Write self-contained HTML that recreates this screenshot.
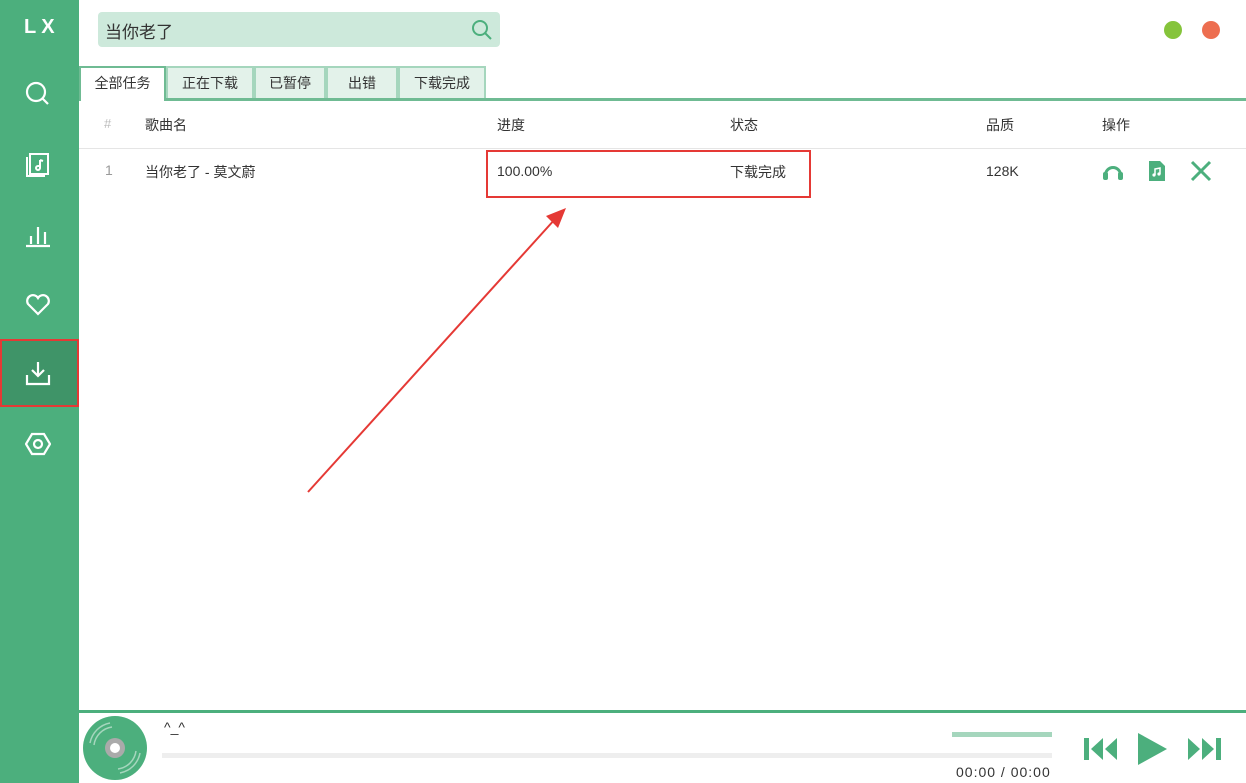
<!DOCTYPE html>
<html><head><meta charset="utf-8"><style>
*{margin:0;padding:0;box-sizing:border-box}
body{width:1246px;height:783px;overflow:hidden;background:#fff;font-family:"Liberation Sans","Noto Sans CJK SC",sans-serif;font-size:14px;color:#333;position:relative}
.side{position:absolute;left:0;top:0;width:79px;height:783px;background:#4caf7d}
.abs{position:absolute}
.tab{position:absolute;top:66px;height:32px;background:#e3f2ea;border:2px solid #a5d6bd;border-bottom:none;font-size:14px;line-height:30px;text-align:center;color:#333}
</style></head><body>
<div class="side"></div>
<div class="abs" style="left:24px;top:16px;color:#fff;font-weight:bold;font-size:20px;letter-spacing:5px">LX</div>
<svg class="abs" style="left:25px;top:81px" width="26" height="26" viewBox="0 0 26 26" fill="none" stroke="#fff" stroke-width="2.2"><circle cx="11" cy="11" r="9"/><path d="M17.5 17.5L23 23"/></svg>
<svg class="abs" style="left:25px;top:151px" width="26" height="26" viewBox="0 0 26 26" fill="none" stroke="#fff" stroke-width="2"><path d="M5 3h18v20H5z"/><path d="M2 6v19h18"/><path d="M15 9v8a2 2 0 1 1-2-2h2M15 9l3 1"/></svg>
<svg class="abs" style="left:25px;top:222px" width="26" height="26" viewBox="0 0 26 26" fill="none" stroke="#fff" stroke-width="2.2"><path d="M1 24h24M6 14v8M13 5v17M20 10v12"/></svg>
<svg class="abs" style="left:25px;top:292px" width="26" height="26" viewBox="0 0 26 26" fill="none" stroke="#fff" stroke-width="2.2"><path d="M13 22L3 12a5.5 5.5 0 0 1 10-6a5.5 5.5 0 0 1 10 6z"/></svg>
<div class="abs" style="left:0;top:339px;width:79px;height:68px;background:#3f9468;border:2px solid #e53935"></div>
<svg class="abs" style="left:25px;top:360px" width="26" height="26" viewBox="0 0 26 26" fill="none" stroke="#fff" stroke-width="2.2"><path d="M13 2v14M7 10l6 6 6-6M2 15v9h22v-9"/></svg>
<svg class="abs" style="left:25px;top:431px" width="26" height="26" viewBox="0 0 26 26" fill="none" stroke="#fff" stroke-width="2.2"><path d="M7 3h12l6 10-6 10H7L1 13z"/><circle cx="13" cy="13" r="4"/></svg>

<div class="abs" style="left:98px;top:12px;width:402px;height:35px;background:#cde9db;border-radius:4px"></div>
<div class="abs" style="left:105px;top:18px;font-size:17px;color:#333">当你老了</div>
<svg class="abs" style="left:471px;top:19px" width="22" height="22" viewBox="0 0 22 22" fill="none" stroke="#4caf7d" stroke-width="2"><circle cx="9" cy="9" r="7"/><path d="M14 14l6 6"/></svg>
<div class="abs" style="left:1164px;top:21px;width:18px;height:18px;border-radius:50%;background:#85c43b"></div>
<div class="abs" style="left:1202px;top:21px;width:18px;height:18px;border-radius:50%;background:#ed6e50"></div>

<div class="abs" style="left:79px;top:98px;width:1167px;height:3px;background:#6fbb93"></div>
<div class="tab" style="left:79px;width:87px;background:#fff;border-color:#6fbb93;height:35px">全部任务</div>
<div class="tab" style="left:166px;width:88px">正在下载</div>
<div class="tab" style="left:254px;width:72px">已暂停</div>
<div class="tab" style="left:326px;width:72px">出错</div>
<div class="tab" style="left:398px;width:88px">下载完成</div>

<div class="abs" style="left:104px;top:116px;color:#bbb;font-size:13px">#</div>
<div class="abs" style="left:145px;top:115px">歌曲名</div>
<div class="abs" style="left:497px;top:115px">进度</div>
<div class="abs" style="left:730px;top:115px">状态</div>
<div class="abs" style="left:986px;top:115px">品质</div>
<div class="abs" style="left:1102px;top:115px">操作</div>
<div class="abs" style="left:79px;top:148px;width:1167px;height:1px;background:#e5e5e5"></div>
<div class="abs" style="left:105px;top:162px;color:#999">1</div>
<div class="abs" style="left:145px;top:162px">当你老了 - 莫文蔚</div>
<div class="abs" style="left:486px;top:150px;width:325px;height:48px;border:2px solid #e53935"></div>
<div class="abs" style="left:497px;top:163px">100.00%</div>
<div class="abs" style="left:730px;top:162px">下载完成</div>
<div class="abs" style="left:986px;top:163px">128K</div>
<svg class="abs" style="left:1102px;top:161px" width="22" height="20" viewBox="0 0 22 20" fill="#4caf7d"><path d="M2 14a9 9 0 0 1 18 0h-3a6 6 0 0 0-12 0z"/><rect x="1" y="11" width="5" height="8" rx="2"/><rect x="16" y="11" width="5" height="8" rx="2"/></svg>
<svg class="abs" style="left:1148px;top:160px" width="18" height="22" viewBox="0 0 18 22"><path d="M1 1h11l5 5v15H1z" fill="#4caf7d"/><path d="M7 15V9l5-1v6" stroke="#fff" stroke-width="1.5" fill="none"/><circle cx="6" cy="15" r="1.6" fill="#fff"/><circle cx="11" cy="14" r="1.6" fill="#fff"/></svg>
<svg class="abs" style="left:1189px;top:160px" width="24" height="22" viewBox="0 0 24 22" stroke="#4caf7d" stroke-width="3"><path d="M3 2l18 18M21 2L3 20"/></svg>

<svg class="abs" style="left:300px;top:200px" width="280" height="300" viewBox="0 0 280 300"><path d="M8 292L256 18" stroke="#e53935" stroke-width="2"/><path d="M266 8L246 16L258 28z" fill="#e53935"/></svg>

<div class="abs" style="left:79px;top:710px;width:1167px;height:3px;background:#4caf7d"></div>
<svg class="abs" style="left:82px;top:715px" width="66" height="66" viewBox="0 0 66 66"><circle cx="33" cy="33" r="32" fill="#4caf7d"/><circle cx="33" cy="33" r="10" fill="#aaa"/><circle cx="33" cy="33" r="5" fill="#fff"/><path d="M12 30a21 21 0 0 1 18-18M8 28a25 25 0 0 1 20-20M54 36a21 21 0 0 1-18 18M58 38a25 25 0 0 1-20 20" stroke="#a5d6bd" stroke-width="1.5" fill="none"/></svg>
<div class="abs" style="left:164px;top:719px;font-size:14px">^_^</div>
<div class="abs" style="left:162px;top:753px;width:890px;height:5px;background:#eee"></div>
<div class="abs" style="left:952px;top:732px;width:100px;height:5px;background:#a5d6bd"></div>
<div class="abs" style="left:956px;top:764px;font-size:14px;letter-spacing:1px">00:00 / 00:00</div>
<svg class="abs" style="left:1083px;top:736px" width="36" height="26" viewBox="0 0 36 26" fill="#4caf7d"><rect x="1" y="2" width="5" height="22"/><path d="M20 2L8 13l12 11zM34 2L22 13l12 11z"/></svg>
<svg class="abs" style="left:1136px;top:732px" width="32" height="34" viewBox="0 0 32 34" fill="#4caf7d"><path d="M2 1l29 16L2 33z"/></svg>
<svg class="abs" style="left:1186px;top:736px" width="36" height="26" viewBox="0 0 36 26" fill="#4caf7d"><rect x="30" y="2" width="5" height="22"/><path d="M2 2l12 11L2 24zM16 2l12 11-12 11z"/></svg>
</body></html>
